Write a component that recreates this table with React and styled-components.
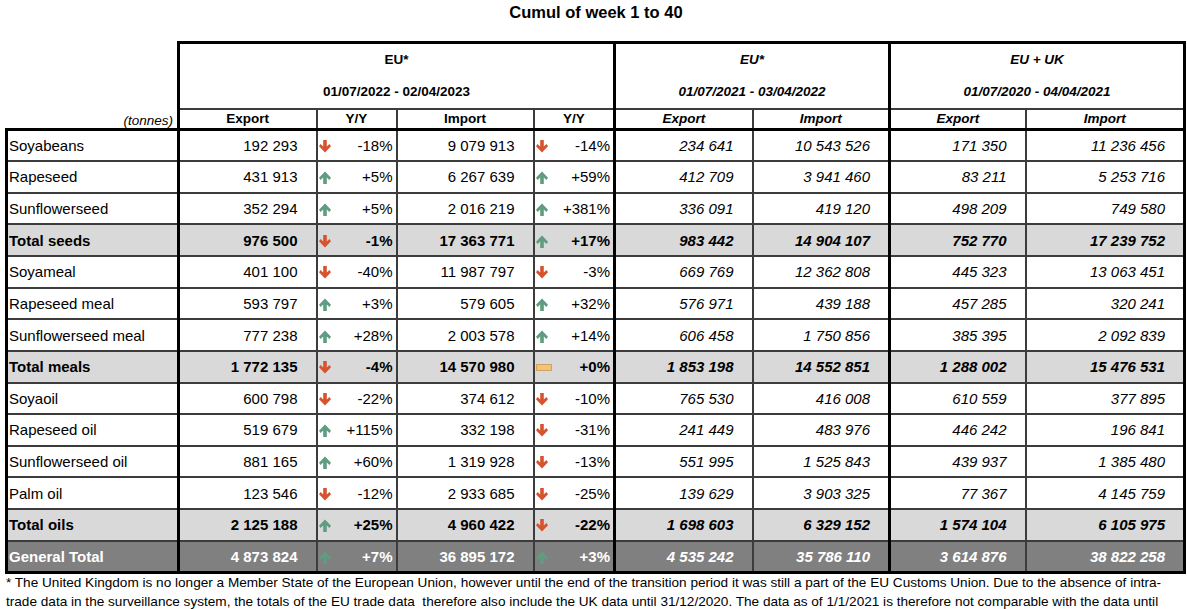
import styled, { createGlobalStyle, css } from 'styled-components'

const GlobalStyle = createGlobalStyle`
  html, body {
    margin: 0;
    padding: 0;
    background: #fff;
  }
  body {
    font-family: "Liberation Sans", Arial, sans-serif;
    color: #000;
  }
`

const THIN = '2px solid #3c3c3c'
const THICK = '3px solid #000'

const Page = styled.div`
  padding: 3px 0 0 5px;
  width: 1182px;
`

const Title = styled.div`
  font-size: 16.5px;
  font-weight: bold;
  line-height: 18px;
  height: 38px;
  text-align: center;
`

const Table = styled.table`
  border-collapse: collapse;
  table-layout: fixed;
  width: 1178px;
  font-size: 15px;
`

const GroupHead = styled.th`
  border-left: ${THICK};
  border-right: ${THICK};
  border-top: ${(p) => (p.$top ? THICK : 'none')};
  border-bottom: ${(p) => (p.$top ? 'none' : THIN)};
  font-size: 13.5px;
  font-weight: bold;
  font-style: ${(p) => (p.$italic ? 'italic' : 'normal')};
  text-align: center;
  padding: 0;
`

const HeadRow = styled.tr`
  height: 33px;
`

const SubRow = styled.tr`
  height: 21px;
`

const Corner = styled.th`
  border: none;
  padding: 0;
`

const Unit = styled.th`
  border: none;
  font-size: 13.5px;
  font-weight: normal;
  font-style: italic;
  text-align: right;
  padding: 0 4px 0 0;
  vertical-align: bottom;
`

const SubHead = styled.th`
  border: ${THIN};
  border-left: ${(p) => (p.$group ? THICK : THIN)};
  border-right: ${(p) => (p.$last ? THICK : THIN)};
  font-size: 13.5px;
  font-weight: bold;
  font-style: ${(p) => (p.$italic ? 'italic' : 'normal')};
  text-align: center;
  padding: 0;
`

const Row = styled.tr`
  height: 31.64px;
  ${(p) =>
    p.$kind === 'total' &&
    css`
      background: #d9d9d9;
      font-weight: bold;
    `}
  ${(p) =>
    p.$kind === 'grand' &&
    css`
      background: #808080;
      color: #fff;
      font-weight: bold;
    `}
`

const Name = styled.td`
  border: ${THIN};
  border-left: ${THICK};
  border-top: ${(p) => (p.$first ? THICK : THIN)};
  border-bottom: ${(p) => (p.$end ? THICK : THIN)};
  padding: 0 0 0 1px;
  white-space: nowrap;
`

const Num = styled.td`
  border: ${THIN};
  border-left: ${(p) => (p.$group ? THICK : THIN)};
  border-right: ${(p) => (p.$last ? THICK : THIN)};
  border-top: ${(p) => (p.$first ? THICK : THIN)};
  border-bottom: ${(p) => (p.$end ? THICK : THIN)};
  font-style: ${(p) => (p.$italic ? 'italic' : 'normal')};
  text-align: right;
  padding: 0 18px 0 0;
  white-space: nowrap;
`

const TrendCell = styled.td`
  border: ${THIN};
  border-top: ${(p) => (p.$first ? THICK : THIN)};
  border-bottom: ${(p) => (p.$end ? THICK : THIN)};
  padding: 0 3px 0 1px;
`

const Trend = styled.div`
  display: flex;
  align-items: center;
  justify-content: space-between;
  white-space: nowrap;
`

const IconBox = styled.span`
  display: flex;
  align-items: center;
  width: 16px;
  height: 16px;
  margin-top: 2px;
`

const ArrowSvg = styled.svg`
  display: block;
  transform: ${(p) => (p.$up ? 'rotate(180deg)' : 'none')};
`

const Footnote = styled.div`
  font-size: 13.6px;
  line-height: 19px;
  margin-top: -1px;
  padding: 0 0 0 1px;
  white-space: nowrap;

  span {
    display: block;
  }
`

const Arrow = ({ dir }) => {
  if (dir === 'flat') {
    return (
      <IconBox>
        <svg width="16" height="7" viewBox="0 0 16 7">
          <rect x="0.5" y="0.5" width="15" height="6" fill="#f1c57d" stroke="#d5a157" />
        </svg>
      </IconBox>
    )
  }
  const up = dir === 'up'
  return (
    <IconBox>
      <ArrowSvg $up={up} width="12" height="13" viewBox="0 0 12 13">
        <path
          d="M4.2 0 H7.8 V6.6 L10.4 4.1 L12 6.2 L6 12.6 L0 6.2 L1.6 4.1 L4.2 6.6 Z"
          fill={up ? '#5f9c80' : '#d6532f'}
        />
      </ArrowSvg>
    </IconBox>
  )
}

const rows = [
  ['Soyabeans', '', '192 293', 'down', '-18%', '9 079 913', 'down', '-14%', '234 641', '10 543 526', '171 350', '11 236 456'],
  ['Rapeseed', '', '431 913', 'up', '+5%', '6 267 639', 'up', '+59%', '412 709', '3 941 460', '83 211', '5 253 716'],
  ['Sunflowerseed', '', '352 294', 'up', '+5%', '2 016 219', 'up', '+381%', '336 091', '419 120', '498 209', '749 580'],
  ['Total seeds', 'total', '976 500', 'down', '-1%', '17 363 771', 'up', '+17%', '983 442', '14 904 107', '752 770', '17 239 752'],
  ['Soyameal', '', '401 100', 'down', '-40%', '11 987 797', 'down', '-3%', '669 769', '12 362 808', '445 323', '13 063 451'],
  ['Rapeseed meal', '', '593 797', 'up', '+3%', '579 605', 'up', '+32%', '576 971', '439 188', '457 285', '320 241'],
  ['Sunflowerseed meal', '', '777 238', 'up', '+28%', '2 003 578', 'up', '+14%', '606 458', '1 750 856', '385 395', '2 092 839'],
  ['Total meals', 'total', '1 772 135', 'down', '-4%', '14 570 980', 'flat', '+0%', '1 853 198', '14 552 851', '1 288 002', '15 476 531'],
  ['Soyaoil', '', '600 798', 'down', '-22%', '374 612', 'down', '-10%', '765 530', '416 008', '610 559', '377 895'],
  ['Rapeseed oil', '', '519 679', 'up', '+115%', '332 198', 'down', '-31%', '241 449', '483 976', '446 242', '196 841'],
  ['Sunflowerseed oil', '', '881 165', 'up', '+60%', '1 319 928', 'down', '-13%', '551 995', '1 525 843', '439 937', '1 385 480'],
  ['Palm oil', '', '123 546', 'down', '-12%', '2 933 685', 'down', '-25%', '139 629', '3 903 325', '77 367', '4 145 759'],
  ['Total oils', 'total', '2 125 188', 'up', '+25%', '4 960 422', 'down', '-22%', '1 698 603', '6 329 152', '1 574 104', '6 105 975'],
  ['General Total', 'grand', '4 873 824', 'up', '+7%', '36 895 172', 'up', '+3%', '4 535 242', '35 786 110', '3 614 876', '38 822 258'],
]

const widths = [172, 138, 80, 137, 81, 138, 137, 136, 159]

export default function App() {
  return (
    <>
      <GlobalStyle />
      <Page>
        <Title>Cumul of week 1 to 40</Title>
        <Table>
          <colgroup>
            {widths.map((w, i) => (
              <col key={i} style={{ width: w }} />
            ))}
          </colgroup>
          <thead>
            <HeadRow>
              <Corner rowSpan={2} />
              <GroupHead $top colSpan={4}>EU*</GroupHead>
              <GroupHead $top $italic colSpan={2}>EU*</GroupHead>
              <GroupHead $top $italic colSpan={2}>EU + UK</GroupHead>
            </HeadRow>
            <HeadRow>
              <GroupHead colSpan={4}>01/07/2022 - 02/04/2023</GroupHead>
              <GroupHead $italic colSpan={2}>01/07/2021 - 03/04/2022</GroupHead>
              <GroupHead $italic colSpan={2}>01/07/2020 - 04/04/2021</GroupHead>
            </HeadRow>
            <SubRow>
              <Unit>(tonnes)</Unit>
              <SubHead $group>Export</SubHead>
              <SubHead>Y/Y</SubHead>
              <SubHead>Import</SubHead>
              <SubHead>Y/Y</SubHead>
              <SubHead $group $italic>Export</SubHead>
              <SubHead $italic>Import</SubHead>
              <SubHead $group $italic>Export</SubHead>
              <SubHead $italic $last>Import</SubHead>
            </SubRow>
          </thead>
          <tbody>
            {rows.map((r, i) => {
              const first = i === 0
              const end = i === rows.length - 1
              const edge = { $first: first, $end: end }
              return (
                <Row key={r[0]} $kind={r[1]}>
                  <Name {...edge}>{r[0]}</Name>
                  <Num $group {...edge}>{r[2]}</Num>
                  <TrendCell {...edge}>
                    <Trend>
                      <Arrow dir={r[3]} />
                      {r[4]}
                    </Trend>
                  </TrendCell>
                  <Num {...edge}>{r[5]}</Num>
                  <TrendCell {...edge}>
                    <Trend>
                      <Arrow dir={r[6]} />
                      {r[7]}
                    </Trend>
                  </TrendCell>
                  <Num $group $italic {...edge}>{r[8]}</Num>
                  <Num $italic {...edge}>{r[9]}</Num>
                  <Num $group $italic {...edge}>{r[10]}</Num>
                  <Num $italic $last {...edge}>{r[11]}</Num>
                </Row>
              )
            })}
          </tbody>
        </Table>
        <Footnote>
          <span>
            * The United Kingdom is no longer a Member State of the European Union, however until the end of the transition period it was still a part of the EU Customs Union. Due to the absence of intra-
          </span>
          <span>
            trade data in the surveillance system, the totals of the EU trade data{'\u00a0'} therefore also include the UK data until 31/12/2020. The data as of 1/1/2021 is therefore not comparable with the data until
          </span>
        </Footnote>
      </Page>
    </>
  )
}
